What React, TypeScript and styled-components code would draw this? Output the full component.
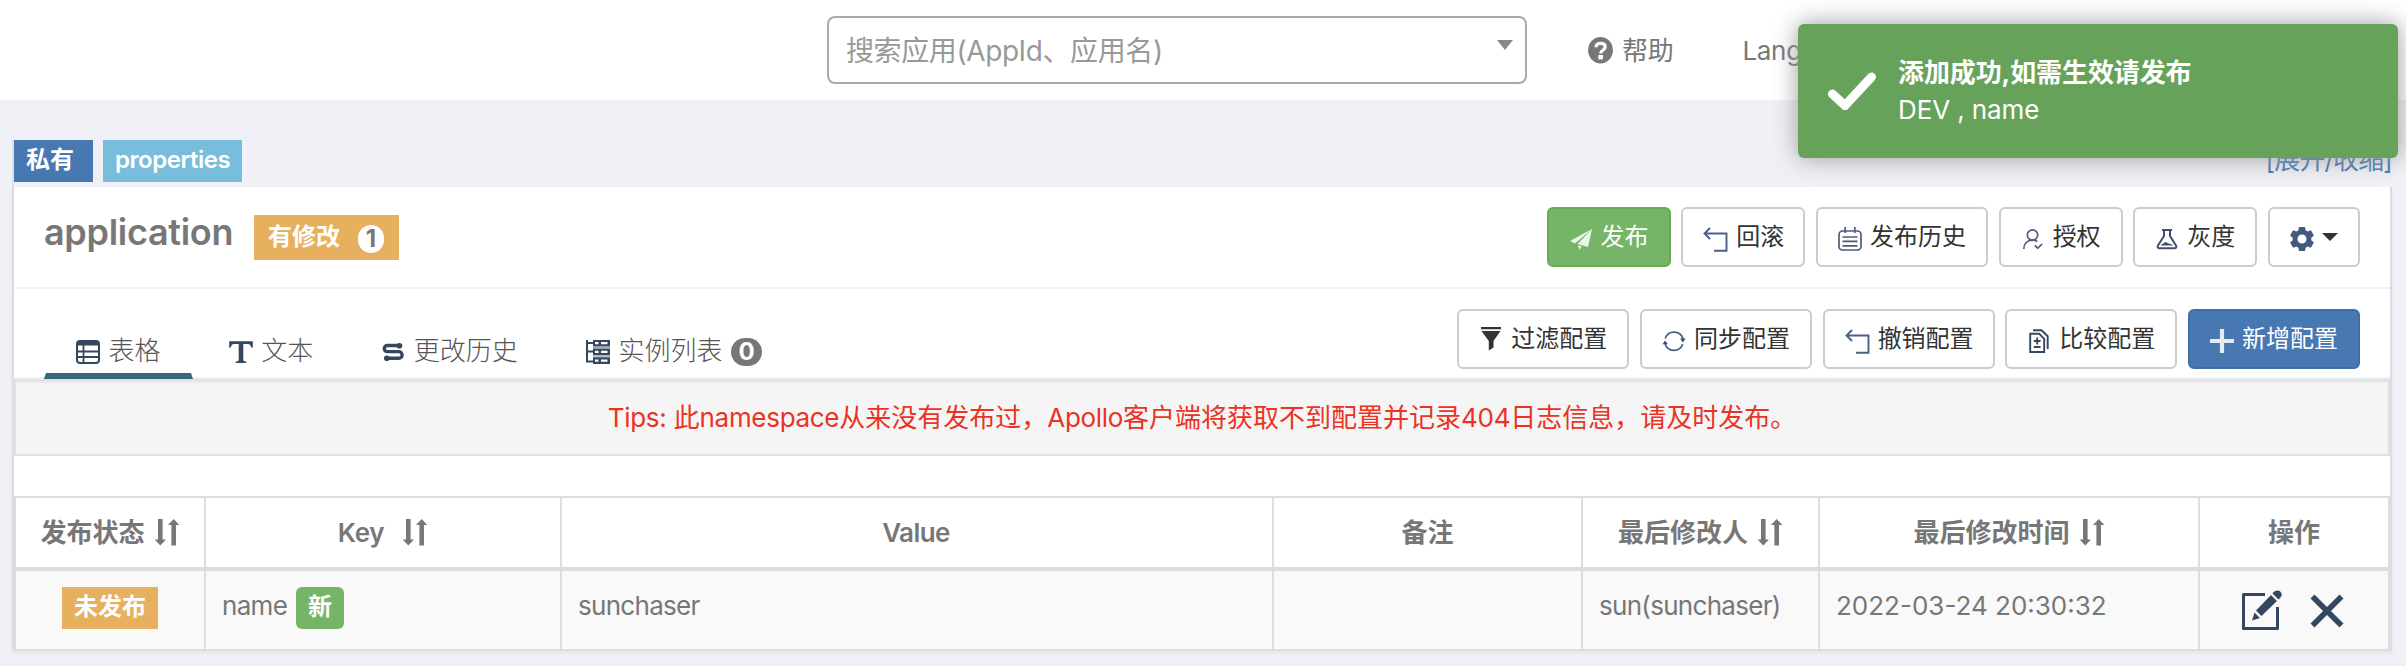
import React from "react";
import styled, { createGlobalStyle, css } from "styled-components";

const GlobalStyle = createGlobalStyle`
  * { box-sizing: border-box; }
  body {
    margin: 0;
    background: #eff1f6;
    color: #777;
    font: 400 26px/37px Inter, "Noto Sans CJK SC", sans-serif;
  }
`;

const Page = styled.div`
  position: relative;
  width: 2406px;
  height: 666px;
  overflow: hidden;
`;

/* Header */
const Header = styled.header`
  display: flex;
  align-items: center;
  height: 100px;
  padding-left: 827px;
  background: #fff;
`;

const AppSelect = styled.div`
  display: flex;
  justify-content: space-between;
  width: 700px;
  height: 68px;
  padding: 15px 12px 0 17px;
  border: 2px solid #aaa;
  border-radius: 8px;
  color: #999;
  font-size: 28px;
  letter-spacing: -0.4px;
`;

const SelectArrow = styled.div`
  width: 0;
  height: 0;
  margin-top: 7px;
  border: solid transparent;
  border-width: 10px 8px 0;
  border-top-color: #888;
`;

const NavItem = styled.a<{ $gap: number }>`
  display: flex;
  align-items: center;
  gap: 9px;
  margin-left: ${(p) => p.$gap}px;
  letter-spacing: -0.3px;
`;

/* Toast */
const Toast = styled.aside`
  position: absolute;
  z-index: 2;
  top: 24px;
  right: 8px;
  display: flex;
  align-items: center;
  gap: 22px;
  width: 600px;
  height: 134px;
  padding: 0 0 0 30px;
  border-radius: 6px;
  background: #67a25b;
  box-shadow: 0 0 24px #999;
  color: #fff;
`;

const ToastTitle = styled.div`
  font-weight: 700;
  letter-spacing: -0.1px;
`;

const ToastMessage = styled.div`
  letter-spacing: -0.1px;
`;

/* Namespace panel */
const Namespace = styled.section`
  margin: 40px 14px 0 12px;
`;

const TagRow = styled.div`
  display: flex;
  gap: 10px;
  height: 47px;
  border-left: 2px solid #dfe0e4;
`;

const Tag = styled.span<{ $bg: string; $right?: number; $radius?: number; $spacing?: number }>`
  height: 42px;
  padding: 0 ${(p) => p.$right ?? 12}px 0 12px;
  border-radius: ${(p) => p.$radius ?? 0}px;
  background: ${(p) => p.$bg};
  color: #fff;
  font-size: 24px;
  font-weight: 600;
  line-height: 40px;
  letter-spacing: ${(p) => p.$spacing ?? 0}px;
`;

const ToggleLink = styled.a`
  margin: 1px 0 0 auto;
  color: #4878b1;
  letter-spacing: -0.85px;
`;

const Panel = styled.div`
  border: solid #ddd;
  border-width: 0 2px;
  background: #fff;
  box-shadow: 0 2px 4px rgba(0, 0, 0, 0.06);
`;

const PanelHead = styled.div`
  display: flex;
  justify-content: space-between;
  height: 102px;
  padding: 20px 30px 0;
  border-bottom: 2px solid #edf0f5;
`;

const TitleGroup = styled.div`
  display: flex;
`;

const Title = styled.h4`
  width: 210px;
  margin: 0;
  font-size: 36px;
  font-weight: 600;
  line-height: 50px;
  letter-spacing: -0.3px;
`;

const ModifiedBadge = styled.span`
  display: flex;
  gap: 18px;
  width: 145px;
  height: 45px;
  margin-top: 8px;
  padding-left: 14px;
  background: #e6b05f;
  color: #fff;
  font-size: 24px;
  font-weight: 700;
  line-height: 43px;
`;

const Count = styled.span<{ $dark?: boolean }>`
  display: flex;
  align-items: center;
  justify-content: center;
  width: ${(p) => (p.$dark ? 31 : 26)}px;
  height: 28px;
  border-radius: 14px;
  background: ${(p) => (p.$dark ? "#777" : "#fff")};
  color: ${(p) => (p.$dark ? "#fff" : "#777")};
  font-size: 24px;
  font-weight: 700;
  line-height: 28px;
`;

const CountSlot = styled.span`
  padding-top: 10px;
`;

const ButtonGroup = styled.div`
  display: flex;
  gap: 10.7px;
`;

const tones = {
  plain: css`
    background: #fff;
    border-color: #ccc;
    color: #333;
  `,
  success: css`
    background: #76b567;
    border-color: #67ab57;
    color: #fff;
  `,
  primary: css`
    background: #4878b1;
    border-color: #406da4;
    color: #fff;
  `,
};

const Button = styled.button<{ $tone?: keyof typeof tones; $width: number }>`
  display: flex;
  align-items: center;
  gap: 8px;
  width: ${(p) => p.$width}px;
  height: 60px;
  padding: 0 0 0 20px;
  border: 2px solid;
  border-radius: 6px;
  font: 400 24px/34px Inter, "Noto Sans CJK SC", sans-serif;
  white-space: nowrap;
  ${(p) => tones[p.$tone ?? "plain"]}

  svg {
    margin-top: 4px;
  }
`;

const Caret = styled.span`
  border: solid transparent;
  border-width: 8px 8px 0;
  border-top-color: #333;
`;

const TabBar = styled.div`
  display: flex;
  justify-content: space-between;
  height: 90px;
  padding: 20px 30px 0;
  border-bottom: 2px solid #edf0f5;
`;

const Tabs = styled.nav`
  display: flex;
  gap: 4px;
  align-self: flex-end;
  margin-bottom: -2px;
`;

const Tab = styled.a<{ $active?: boolean }>`
  display: flex;
  align-items: center;
  gap: 8.6px;
  height: 58px;
  padding: 6px 30px 0;
  border: solid transparent;
  border-width: 0 2px 6px;
  border-bottom-color: ${(p) => (p.$active ? "#33697b" : "transparent")};
  color: #555;
  font-weight: 300;

  svg {
    margin-top: 4px;
  }
`;

const Tips = styled.div`
  height: 77px;
  padding-top: 18px;
  border: 2px solid #e1e1e1;
  background: #f5f5f5;
  box-shadow: inset 0 2px 2px rgba(0, 0, 0, 0.05);
  color: #ea3323;
  text-align: center;
`;

const Latin = styled.span`
  letter-spacing: -0.3px;
`;

/* Table */
const Table = styled.div`
  margin-top: 40px;
  border: 2px solid #ddd;
`;

const Row = styled.div<{ $head?: boolean }>`
  display: grid;
  grid-template-columns: 190px 356px 712px 309px 237px 380px 188px;
  height: ${(p) => (p.$head ? 73 : 78)}px;
  border-bottom: ${(p) => (p.$head ? "4px solid #ddd" : "0")};
  background: ${(p) => (p.$head ? "#fff" : "#f9f9f9")};
`;

const HeadCell = styled.div<{ $gap?: number }>`
  display: flex;
  align-items: center;
  justify-content: center;
  gap: ${(p) => p.$gap ?? 9}px;
  border-right: 2px solid #ddd;
  font-weight: 600;
  letter-spacing: ${(p) => (p.$gap ? "-0.3px" : "0")};
  &:last-child {
    border-right: 0;
  }
`;

const ValueHead = styled(HeadCell)`
  padding-right: 2px;
  letter-spacing: -0.6px;
`;

const Cell = styled.div<{ $center?: boolean; $spacing?: number }>`
  display: flex;
  align-items: flex-start;
  justify-content: ${(p) => (p.$center ? "center" : "flex-start")};
  gap: 9px;
  padding: 16px 16px 0;
  border-right: 2px solid #ddd;
  letter-spacing: ${(p) => p.$spacing ?? 0}px;
  white-space: nowrap;
  &:last-child {
    border-right: 0;
  }
`;

const Actions = styled(Cell)`
  gap: 28px;
  padding: 19px 0 0 42px;
`;

/* Icons */
const NAVY = "#35475f";

const Line = styled.svg.attrs({ fill: "none" })`
  flex: none;
  display: block;
`;

const SortIcon = () => (
  <Line width="26" height="28" viewBox="0 0 26 28">
    <path
      fill="#777"
      d="M4 0h4.600v20.500h3.400l-5.700 6-5.700-6H4zM17.400 26.500V6H14l5.700-6 5.700 6H22v20.500z"
    />
  </Line>
);

const HelpIcon = () => (
  <Line width="25" height="27" viewBox="0 0 25 27">
    <ellipse cx="12.5" cy="13.2" rx="12.4" ry="13.2" fill="#777" />
    <path d="M8 10.2C8 7.4 9.8 6.3 12.6 6.3c3 0 4.6 1.3 4.6 3.7 0 3.3-4.6 3.2-4.6 6.4" stroke="#fff" strokeWidth="3.2" />
    <rect x="10.3" y="18" width="4.6" height="4.4" fill="#fff" />
  </Line>
);

const CheckIcon = () => (
  <Line width="48" height="38" viewBox="0 0 48 38">
    <path d="M4.500 22L17 33.500 43.500 5" stroke="#fff" strokeWidth="9" strokeLinecap="round" />
  </Line>
);

const PlaneIcon = () => (
  <Line width="24" height="24" viewBox="0 0 24 24">
    <path fill="#fff" fillOpacity="0.88" d="M23 2L1 14l5 2.500zM23 2L8.500 17l10.500 3zM9 18.200l3.500 1L10.500 23z" />
  </Line>
);

const BackIcon = () => (
  <Line width="25" height="25" viewBox="0 0 25 25">
    <path d="M7 1L1.500 6.500 7 12M1.500 6.500H23.500V23.800H11" stroke="#4a6087" strokeWidth="1.9" />
  </Line>
);

const CalendarIcon = () => (
  <Line width="24" height="24" viewBox="0 0 24 24">
    <rect x="1" y="4" width="22" height="19" rx="3.500" stroke="#4d5c7a" strokeWidth="1.700" />
    <path d="M7.200 0v6M16.800 0v6M4.500 10h15M4.500 14.300h15M4.500 18.800h15" stroke="#4d5c7a" strokeWidth="1.700" />
  </Line>
);

const UserIcon = () => (
  <Line width="24" height="24" viewBox="0 0 24 24">
    <circle cx="11.500" cy="8" r="5.200" stroke="#4d5c7a" strokeWidth="1.700" />
    <path d="M2.800 22c0-5 3-8.600 8.700-8.800 2 0 3.500.4 4.800 1.300M13.800 18.500l3 2.700 4.400-4.200" stroke="#4d5c7a" strokeWidth="1.700" />
  </Line>
);

const FlaskIcon = () => (
  <Line width="24" height="24" viewBox="0 0 24 24">
    <path d="M7 3h10M9 3v6L3 18.500C2 20.300 3 21.300 4.500 21.300h15c1.500 0 2.500-1 1.500-2.800L15 9V3" stroke="#3f5070" strokeWidth="2" />
    <path fill="#3f5070" d="M5.500 18.500c2-2 3.500-2 5-3.800 1.500 1.800 5 1.600 8 3.800z" />
  </Line>
);

const GearIcon = () => (
  <Line width="24" height="24" viewBox="0 0 24 24">
    <path
      fill="#44597d"
      fillRule="evenodd"
      d="M9 0h6l.6 3.300 2 1.200 3.300-1.200 3 5.200-2.600 2.200v2.600l2.600 2.200-3 5.200-3.300-1.200-2 1.200L15 24H9l-.6-3.300-2-1.200-3.300 1.200-3-5.200 2.600-2.200v-2.600L.1 8.500l3-5.200 3.300 1.200 2-1.200zM12 7.500a4.500 4.500 0 100 9 4.500 4.500 0 000-9z"
    />
  </Line>
);

const FilterIcon = () => (
  <Line width="24" height="28" viewBox="0 0 24 28">
    <path fill="#333" d="M2 0h20v2.200H2zM2.500 4h19L14.500 14v6.500L9.800 23.500V14z" />
  </Line>
);

const SyncIcon = () => (
  <Line width="24" height="24" viewBox="0 0 24 24">
    <path d="M3.200 9.500A9.300 9.300 0 0121 10M20.800 15A9.300 9.300 0 013 14.500" stroke="#4a5f85" strokeWidth="1.700" />
    <path fill="#3b4b69" d="M18 9.500h5.500L21 13.500zM.5 15.200H6L3 11.500z" />
  </Line>
);

const CompareIcon = () => (
  <Line width="24" height="25" viewBox="0 0 24 25">
    <path d="M3.200 4.800h9l5 5v13.200h-14z" stroke={NAVY} strokeWidth="1.900" />
    <path d="M6 1.200h8.500l6.200 6V20M6.800 12h6.800M10.200 8.600v6.800M6.800 18h6.800" stroke={NAVY} strokeWidth="1.900" />
  </Line>
);

const PlusIcon = () => (
  <Line width="24" height="24" viewBox="0 0 24 24">
    <path d="M0 12h24M12 0v24" stroke="#e6ebf2" strokeWidth="4.200" />
  </Line>
);

const TableIcon = () => (
  <Line width="24" height="24" viewBox="0 0 24 24">
    <rect x="1" y="1" width="22" height="22" rx="3" fill="#fff" stroke={NAVY} strokeWidth="2" />
    <path d="M1 3.500h22" stroke={NAVY} strokeWidth="4" />
    <path d="M1 11.500h22M1 17h22M7.500 4v19" stroke={NAVY} strokeWidth="1.800" />
  </Line>
);

const TextIcon = () => (
  <Line width="24" height="24" viewBox="0 0 24 24">
    <path fill={NAVY} d="M.2 1.200h23.600v6.300h-1.700c-.4-2.400-1.200-3.500-3.500-3.500h-4.300v15.800c0 1.300.8 1.700 3 1.800V23H6.700v-1.400c2.200-.1 3-.5 3-1.800V4H5.400C3.100 4 2.300 5.100 1.900 7.500H.2z" />
  </Line>
);

const HistoryIcon = () => (
  <Line width="24" height="24" viewBox="0 0 24 24">
    <path d="M18.500 5.500H6.300a3 3 0 000 6.100h11.500a3.300 3.300 0 010 6.700H6" stroke={NAVY} strokeWidth="3.400" />
    <circle cx="18.500" cy="5.700" r="2.800" fill={NAVY} />
    <circle cx="5.800" cy="18.200" r="2.800" fill={NAVY} />
  </Line>
);

const InstanceIcon = () => (
  <Line width="24" height="24" viewBox="0 0 24 24">
    <path d="M1 0v21.500h7M1 11.500h7M1 3h7" stroke={NAVY} strokeWidth="2" />
    <path fill={NAVY} d="M7 0h17v6.500H7zM7 8.500h17V15H7zM7 17.200h17V24H7z" />
    <path d="M7 7.500h17M7 16h17" stroke="#9aa3b5" strokeWidth="1.400" />
    <path d="M9 3.200h3.500M15 3.200h6.500M9 11.800h3.500M15 11.800h6.500M9 20.600h3.500M15 20.600h6.500" stroke="#fff" strokeWidth="2.200" />
  </Line>
);

const EditIcon = () => (
  <Line width="40" height="40" viewBox="0 0 40 40">
    <path d="M23 4.500H1.500v34h34V17" stroke={NAVY} strokeWidth="3" strokeLinejoin="round" />
    <path fill={NAVY} d="M10 30.500l2.500-8 5.500 5.500zM14 20.500L29 5l6 6-15.500 15zM30.500 3.500C33-.5 38 0 39 2.500c1.500 2 .5 4.500-2.500 7z" />
  </Line>
);

const CloseIcon = () => (
  <Line width="34" height="34" viewBox="0 0 34 34">
    <path d="M2.500 2.500l29 29M31.500 2.500l-29 29" stroke={NAVY} strokeWidth="5.600" />
  </Line>
);

const IconDrop = styled.span`
  padding-top: 4px;
`;

const rowTools: [string, React.FC][] = [
  ["过滤配置", FilterIcon],
  ["同步配置", SyncIcon],
  ["撤销配置", BackIcon],
  ["比较配置", CompareIcon],
];

export default function App() {
  return (
    <Page>
      <GlobalStyle />
      <Header>
        <AppSelect>
          <span>搜索应用(AppId、应用名)</span>
          <SelectArrow />
        </AppSelect>
        <NavItem $gap={61}>
          <HelpIcon />
          帮助
        </NavItem>
        <NavItem $gap={69}>Language</NavItem>
      </Header>

      <Toast>
        <CheckIcon />
        <div>
          <ToastTitle>添加成功,如需生效请发布</ToastTitle>
          <ToastMessage>DEV , name</ToastMessage>
        </div>
      </Toast>

      <Namespace>
        <TagRow>
          <Tag $bg="#4878b1" $right={19}>私有</Tag>
          <Tag $bg="#78bddc" $spacing={-0.45}>properties</Tag>
          <ToggleLink>[展开/收缩]</ToggleLink>
        </TagRow>

        <Panel>
          <PanelHead>
            <TitleGroup>
              <Title>application</Title>
              <ModifiedBadge>
                有修改
                <CountSlot>
                  <Count>1</Count>
                </CountSlot>
              </ModifiedBadge>
            </TitleGroup>
            <ButtonGroup>
              <Button $tone="success" $width={124}><PlaneIcon />发布</Button>
              <Button $width={124}><BackIcon />回滚</Button>
              <Button $width={172}><CalendarIcon />发布历史</Button>
              <Button $width={124}><UserIcon />授权</Button>
              <Button $width={124}><FlaskIcon />灰度</Button>
              <Button $width={92}><GearIcon /><Caret /></Button>
            </ButtonGroup>
          </PanelHead>

          <TabBar>
            <Tabs>
              <Tab $active><TableIcon />表格</Tab>
              <Tab><TextIcon />文本</Tab>
              <Tab><HistoryIcon />更改历史</Tab>
              <Tab>
                <InstanceIcon />实例列表
                <IconDrop>
                  <Count $dark>0</Count>
                </IconDrop>
              </Tab>
            </Tabs>
            <ButtonGroup>
              {rowTools.map(([label, Icon]) => (
                <Button key={label} $width={172}><Icon />{label}</Button>
              ))}
              <Button $tone="primary" $width={172}><PlusIcon />新增配置</Button>
            </ButtonGroup>
          </TabBar>

          <Tips>
            <Latin>Tips: </Latin>此<Latin>namespace</Latin>从来没有发布过，<Latin>Apollo</Latin>
            客户端将获取不到配置并记录<Latin>404</Latin>日志信息，请及时发布。
          </Tips>

          <Table>
            <Row $head>
              <HeadCell>发布状态<SortIcon /></HeadCell>
              <HeadCell $gap={18}>Key<SortIcon /></HeadCell>
              <ValueHead>Value</ValueHead>
              <HeadCell>备注</HeadCell>
              <HeadCell>最后修改人<SortIcon /></HeadCell>
              <HeadCell>最后修改时间<SortIcon /></HeadCell>
              <HeadCell>操作</HeadCell>
            </Row>
            <Row>
              <Cell $center>
                <Tag $bg="#e6b05f">未发布</Tag>
              </Cell>
              <Cell $spacing={-0.7}>
                name
                <Tag $bg="#76b567" $radius={6}>新</Tag>
              </Cell>
              <Cell $spacing={-0.7}>sunchaser</Cell>
              <Cell />
              <Cell $spacing={-0.7}>sun(sunchaser)</Cell>
              <Cell>2022-03-24 20:30:32</Cell>
              <Actions>
                <EditIcon />
                <IconDrop>
                  <CloseIcon />
                </IconDrop>
              </Actions>
            </Row>
          </Table>
        </Panel>
      </Namespace>
    </Page>
  );
}
